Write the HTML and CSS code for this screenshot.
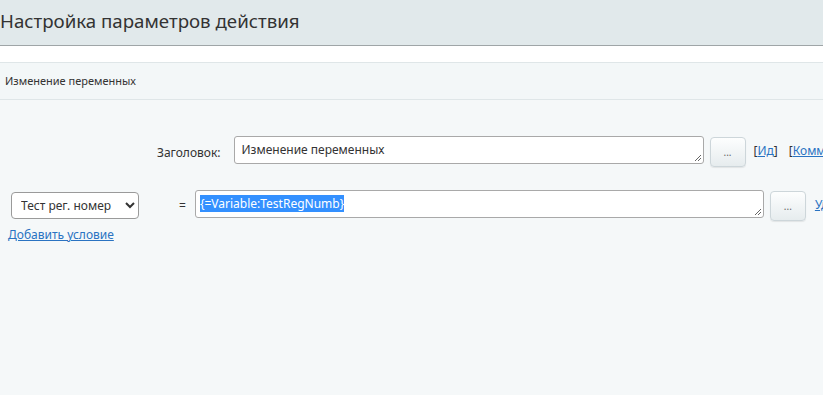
FILE: index.html
```html
<!DOCTYPE html>
<html lang="ru">
<head>
    <meta charset="UTF-8">
    <title>Настройка параметров действия</title>
    <link rel="stylesheet" href="styles.css">
</head>
<body>
    <header class="page-head">
        <h1 class="page-title">Настройка параметров действия</h1>
    </header>
    <div class="spacer"></div>
    <div class="crumbs">Изменение переменных</div>

    <main class="content">
        <div class="row row-title">
            <label class="label">Заголовок:</label>
            <div class="field field-title">
                <span class="field-text">Изменение переменных</span>
                <svg class="grip" width="8" height="8" viewBox="0 0 8 8"><path d="M7 1 L1 7 M7 4 L4 7" stroke="#666" stroke-width="1"/></svg>
            </div>
            <button class="dots">...</button>
            <span class="bracket">[<a href="#">Ид</a>]</span>
            <span class="bracket">[<a href="#">Комментарий</a>]</span>
        </div>

        <div class="row row-var">
            <select class="var-select">
                <option>Тест рег. номер</option>
            </select>
            <span class="eq">=</span>
            <div class="field field-value">
                <span class="field-text"><span class="selected">{=Variable:TestRegNumb}</span></span>
                <svg class="grip" width="8" height="8" viewBox="0 0 8 8"><path d="M7 1 L1 7 M7 4 L4 7" stroke="#666" stroke-width="1"/></svg>
            </div>
            <button class="dots">...</button>
            <a class="del" href="#">Удалить</a>
        </div>

        <a class="add-link" href="#">Добавить условие</a>
    </main>
</body>
</html>
```

FILE: styles.css
```css
body {
    margin: 0;
    padding: 0;
    font-family: 'Noto Sans', 'Open Sans', sans-serif;
    background-color: #f5f8f9;
    color: #333;
    overflow: hidden;
    white-space: nowrap;
}

a {
    color: #2a73c2;
}

.page-head {
    height: 45px;
    background-color: #e1e9eb;
    border-bottom: 1px solid #9fa5a7;
}

.page-title {
    margin: 0;
    padding-top: 8px;
    font-size: 18.7px;
    font-weight: 400;
    color: #333;
    line-height: 26px;
}

.spacer {
    height: 16px;
    background-color: #fff;
}

.crumbs {
    height: 36px;
    line-height: 36px;
    padding-left: 5px;
    font-size: 11px;
    background-color: #f3f7f8;
    border-top: 1px solid #dfe6e8;
    border-bottom: 1px solid #dfe6e8;
}

.content {
    padding-top: 34px;
}

.row {
    display: flex;
    align-items: center;
}

.row > * {
    flex: none;
}

.row-title {
    padding-left: 157px;
    height: 32px;
}

.label {
    font-size: 12px;
    margin-right: 13px;
    margin-top: 4px;
}

.field {
    position: relative;
    box-sizing: border-box;
    height: 28px;
    background-color: #fff;
    border: 1px solid #a9a9a9;
    border-radius: 3px;
    padding: 5px 7px;
    font-size: 12px;
    line-height: 16px;
}

.field-title {
    width: 470px;
}

.field-value {
    width: 569px;
    padding-left: 4px;
}

.grip {
    position: absolute;
    right: 1px;
    bottom: 1px;
}

.selected {
    background-color: #3390ff;
    color: #fff;
}

.dots {
    box-sizing: border-box;
    width: 36px;
    height: 30px;
    margin-left: 6px;
    margin-top: 3px;
    border: 1px solid #cdd6da;
    border-radius: 4px;
    background: linear-gradient(#fdfefe, #e6ecee);
    box-shadow: 0 1px 1px rgba(0,0,0,0.08);
    font-size: 10px;
    color: #666;
    padding: 0;
    font-family: inherit;
}

.bracket {
    font-size: 12px;
    margin-left: 8px;
}

.bracket + .bracket {
    margin-left: 11px;
}

.row-var {
    margin-top: 22px;
    padding-left: 11px;
    height: 32px;
}

.var-select {
    box-sizing: border-box;
    width: 128px;
    height: 27px;
    margin-top: 3px;
    border: 1px solid #9a9a9a;
    border-radius: 4px;
    background-color: #fff;
    font-family: inherit;
    font-size: 12px;
    color: #333;
    padding-left: 5px;
}

.eq {
    font-size: 12px;
    margin-left: 40px;
    margin-right: 9px;
    margin-top: 3px;
}

.del {
    font-size: 12px;
    margin-left: 9px;
}

.add-link {
    display: inline-block;
    margin-left: 8px;
    margin-top: 6px;
    font-size: 12px;
}
```
